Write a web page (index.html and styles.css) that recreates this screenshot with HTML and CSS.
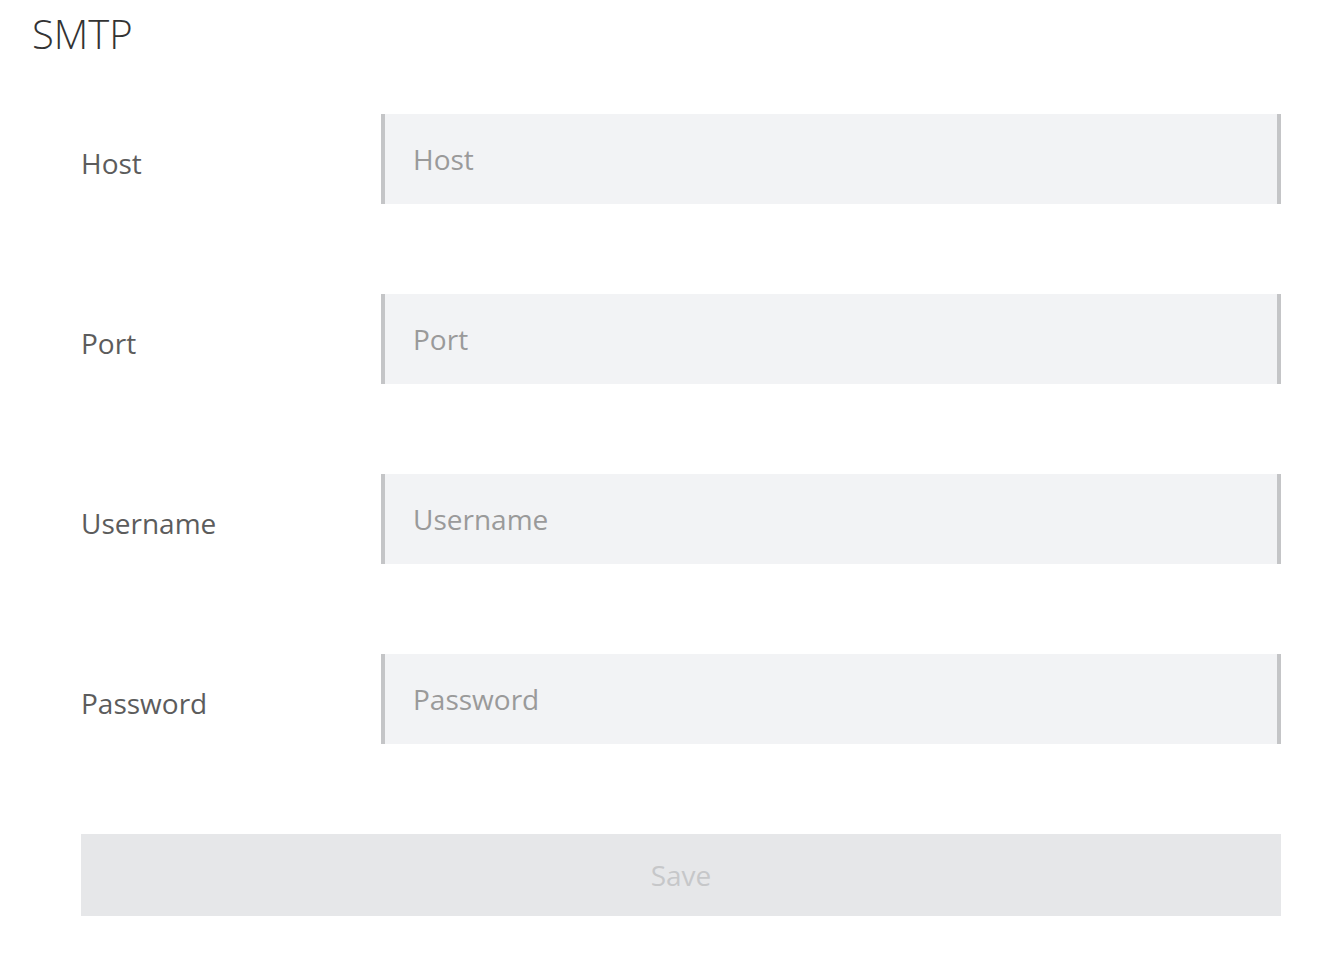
FILE: index.html
```html
<!DOCTYPE html>
<html>
<head>
<meta charset="utf-8">
<link rel="stylesheet" href="styles.css">
</head>
<body>
<h1 class="title">SMTP</h1>
<form class="form">
  <div class="row">
    <label class="label">Host</label>
    <input class="field" type="text" placeholder="Host">
  </div>
  <div class="row">
    <label class="label">Port</label>
    <input class="field" type="text" placeholder="Port">
  </div>
  <div class="row">
    <label class="label">Username</label>
    <input class="field" type="text" placeholder="Username">
  </div>
  <div class="row">
    <label class="label">Password</label>
    <input class="field" type="password" placeholder="Password">
  </div>
  <button class="save" type="button" disabled>Save</button>
</form>
</body>
</html>
```
FILE: styles.css
```css
html, body {
  margin: 0;
  padding: 0;
  background: #fff;
}
body {
  font-family: "Open Sans", "Liberation Sans", sans-serif;
}
.title {
  margin: 0;
  padding: 10px 0 0 32px;
  font-size: 40px;
  line-height: 48px;
  font-weight: 300;
  color: #333;
  height: 114px;
  box-sizing: border-box;
}
.form {
  margin-left: 81px;
  width: 1200px;
  display: flex;
  flex-direction: column;
  gap: 90px;
}
.row {
  display: grid;
  grid-template-columns: 300px 1fr;
  height: 90px;
}
.label {
  font-size: 28px;
  color: #5c5c5c;
  align-self: center;
  padding-top: 8px;
}
.field {
  box-sizing: border-box;
  height: 90px;
  border: none;
  border-left: 4px solid #c4c5c7;
  border-right: 4px solid #c4c5c7;
  background: #f2f3f5;
  padding: 0 0 0 28px;
  font-family: "Open Sans", "Liberation Sans", sans-serif;
  font-size: 28px;
  color: #333;
  outline: none;
}
.field::placeholder {
  color: #9a9a9a;
}
.save {
  height: 82px;
  border: none;
  background: #e6e7e9;
  font-family: "Open Sans", "Liberation Sans", sans-serif;
  font-size: 28px;
  color: #c6c7c9;
}
```
